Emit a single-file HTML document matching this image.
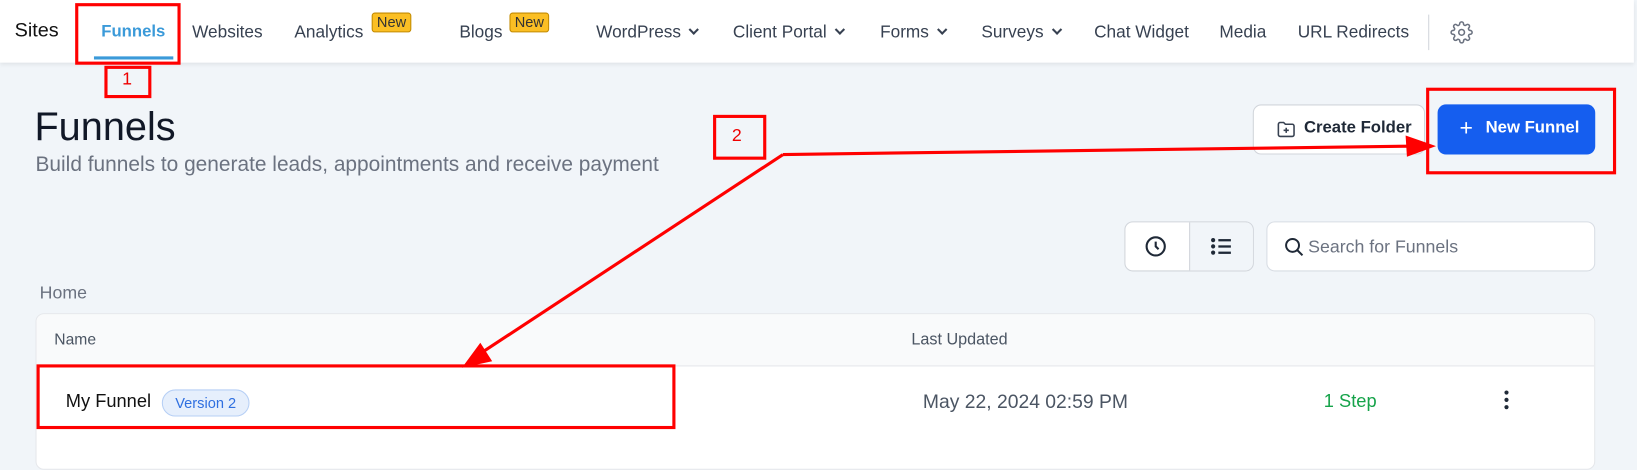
<!DOCTYPE html>
<html><head><meta charset="utf-8"><style>
*{margin:0;padding:0;box-sizing:border-box}
html,body{width:1637px;height:437px;overflow:hidden;background:#f1f5f9}
#w{position:absolute;left:0;top:0;width:1568px;height:419px;transform:scale(1.044);transform-origin:0 0;font-family:"Liberation Sans",sans-serif}
.a{position:absolute;white-space:nowrap}
.nav{position:absolute;left:0;top:0;width:1565px;height:60px;background:#fff;box-shadow:0 2px 4px rgba(0,0,0,.08)}
.ni{position:absolute;top:22px;font-size:16.5px;color:#374151}
.badge{position:absolute;top:12px;height:19px;background:#fbbf24;border:1px solid #c28a00;border-radius:3px;font-size:14px;color:#333;padding:0 4px;line-height:17px}
.chev{display:inline-block;width:7px;height:7px;border-right:2px solid #374151;border-bottom:2px solid #374151;transform:rotate(45deg);margin-left:9px;position:relative;top:-4px}
.red{position:absolute;border:3px solid #f00}
</style></head><body><div id="w">
<div class="nav">
<div class="ni" style="left:14px;font-size:19px;color:#111;top:19px">Sites</div>
<div class="ni" style="left:97px;color:#3b9ad9;font-weight:600;font-size:16px">Funnels</div>
<div class="a" style="left:90px;top:54px;width:76px;height:3px;background:#3b9ad9"></div>
<div class="ni" style="left:184px">Websites</div>
<div class="ni" style="left:282px">Analytics</div>
<div class="badge" style="left:356px">New</div>
<div class="ni" style="left:440px">Blogs</div>
<div class="badge" style="left:488px">New</div>
<div class="ni" style="left:571px">WordPress<span class="chev"></span></div>
<div class="ni" style="left:702px">Client Portal<span class="chev"></span></div>
<div class="ni" style="left:843px">Forms<span class="chev"></span></div>
<div class="ni" style="left:940px">Surveys<span class="chev"></span></div>
<div class="ni" style="left:1048px">Chat Widget</div>
<div class="ni" style="left:1168px">Media</div>
<div class="ni" style="left:1243px">URL Redirects</div>
<div class="a" style="left:1368px;top:14px;width:1px;height:34px;background:#d1d5db"></div>
<svg class="a" style="left:1389px;top:20px" width="22" height="22" viewBox="0 0 24 24" fill="none" stroke="#6b7280" stroke-width="1.6"><circle cx="12" cy="12" r="3"/><path d="M19.4 15a1.65 1.65 0 0 0 .33 1.82l.06.06a2 2 0 1 1-2.830 2.83l-.06-.06a1.65 1.65 0 0 0-1.82-.33 1.65 1.65 0 0 0-1 1.51V21a2 2 0 1 1-4 0v-.09A1.650 1.65 0 0 0 9 19.4a1.65 1.65 0 0 0-1.82.33l-.06.06a2 2 0 1 1-2.83-2.830l.06-.06A1.65 1.65 0 0 0 4.68 15a1.65 1.65 0 0 0-1.51-1H3a2 2 0 1 1 0-4h.09A1.65 1.65 0 0 0 4.6 9a1.65 1.65 0 0 0-.33-1.82l-.06-.06a2 2 0 1 1 2.83-2.83l.06.06A1.65 1.65 0 0 0 9 4.68 1.65 1.65 0 0 0 10 3.17V3a2 2 0 1 1 4 0v.09a1.65 1.65 0 0 0 1 1.51 1.65 1.65 0 0 0 1.82-.33l.06-.06a2 2 0 1 1 2.83 2.83l-.06.06A1.65 1.65 0 0 0 19.4 9a1.65 1.65 0 0 0 1.51 1H21a2 2 0 1 1 0 4h-.09a1.65 1.65 0 0 0-1.51 1z"/></svg>
</div>
<div class="red" style="left:72px;top:3px;width:101px;height:59px"></div>
<div class="red" style="left:100px;top:63px;width:45px;height:31px"></div>
<div class="a" style="left:117px;top:66px;color:#e00;font-size:17px">1</div>

<div class="a" style="left:33px;top:101px;font-size:38px;color:#111827">Funnels</div>
<div class="a" style="left:34px;top:147px;font-size:20px;color:#6b7280">Build funnels to generate leads, appointments and receive payment</div>

<div class="red" style="left:683px;top:110px;width:51px;height:43px"></div>
<div class="a" style="left:701px;top:120px;color:#e00;font-size:17px">2</div>

<div class="a" style="left:1200px;top:100px;width:165px;height:48px;background:#fff;border:1px solid #d1d5db;border-radius:8px"></div>
<svg class="a" style="left:1222px;top:114px" width="20" height="20" viewBox="0 0 24 24" fill="none" stroke="#374151" stroke-width="1.8"><path d="M3 6a2 2 0 0 1 2-2h4l2 2h8a2 2 0 0 1 2 2v10a2 2 0 0 1-2 2H5a2 2 0 0 1-2-2z"/><path d="M12 10v6M9 13h6"/></svg>
<div class="a" style="left:1249px;top:114px;font-size:16px;color:#1f2937;font-weight:600">Create Folder</div>
<div class="a" style="left:1377px;top:100px;width:151px;height:48px;background:#155eef;border-radius:8px"></div>
<div class="a" style="left:1398px;top:110px;font-size:22px;color:#fff;font-weight:300">+</div>
<div class="a" style="left:1423px;top:114px;font-size:16px;color:#fff;font-weight:700">New Funnel</div>
<div class="red" style="left:1366px;top:84px;width:182px;height:83px"></div>

<div class="a" style="left:1077px;top:212px;width:124px;height:48px;background:#fff;border:1px solid #d1d5db;border-radius:8px;overflow:hidden"><div style="position:absolute;left:61px;top:0;width:63px;height:48px;background:#f1f5f9;border-left:1px solid #d1d5db"></div></div>
<svg class="a" style="left:1096px;top:225px" width="22" height="22" viewBox="0 0 24 24" fill="none" stroke="#1f2937" stroke-width="2.2"><circle cx="12" cy="12" r="9.5"/><path d="M12 7v5l3 3"/></svg>
<svg class="a" style="left:1159px;top:226px" width="22" height="20" viewBox="0 0 22 20" fill="#1f2937"><circle cx="3" cy="4" r="2"/><circle cx="3" cy="10" r="2"/><circle cx="3" cy="16" r="2"/><rect x="8" y="3" width="12" height="2.2"/><rect x="8" y="9" width="12" height="2.2"/><rect x="8" y="15" width="12" height="2.2"/></svg>
<div class="a" style="left:1213px;top:212px;width:315px;height:48px;background:#fff;border:1px solid #d8dde4;border-radius:8px"></div>
<svg class="a" style="left:1230px;top:227px" width="19" height="19" viewBox="0 0 20 20" fill="none" stroke="#1f2937" stroke-width="2"><circle cx="8.5" cy="8.5" r="6.5"/><path d="M13.5 13.5l5 5"/></svg>
<div class="a" style="left:1253px;top:227px;font-size:17px;color:#6b7280">Search for Funnels</div>

<div class="a" style="left:38px;top:271px;font-size:17px;color:#6b7280">Home</div>
<div class="a" style="left:34px;top:300px;width:1494px;height:150px;background:#fff;border:1px solid #e5e7eb;border-radius:8px;overflow:hidden">
<div style="height:50px;background:#f9fafb;border-bottom:1px solid #e5e7eb"></div></div>
<div class="a" style="left:52px;top:317px;font-size:15px;color:#4b5563">Name</div>
<div class="a" style="left:873px;top:317px;font-size:15.5px;color:#4b5563">Last Updated</div>
<div class="a" style="left:63px;top:374px;font-size:17.5px;color:#111">My Funnel</div>
<div class="a" style="left:155px;top:373px;height:26px;width:84px;background:#e6effc;border:1px solid #b6cff5;border-radius:13px;font-size:14px;color:#2f6fe0;line-height:24px;text-align:center">Version 2</div>
<div class="a" style="left:884px;top:374px;font-size:18.5px;color:#4b5563">May 22, 2024 02:59 PM</div>
<div class="a" style="left:1268px;top:374px;font-size:17.5px;color:#16a34a">1 Step</div>
<svg class="a" style="left:1439px;top:373px" width="8" height="20" viewBox="0 0 8 20" fill="#1f2937"><circle cx="4" cy="3" r="2"/><circle cx="4" cy="10" r="2"/><circle cx="4" cy="17" r="2"/></svg>
<div class="red" style="left:35px;top:349px;width:612px;height:62px"></div>

<svg class="a" style="left:0;top:0" width="1568" height="419">
<g stroke="#f00" stroke-width="3" fill="#f00">
<line x1="750" y1="148" x2="1350" y2="140"/>
<polygon points="1371,140 1348,132 1349,148"/>
<line x1="750" y1="148" x2="458" y2="340"/>
<polygon points="446,350 460,331 469,345"/>
</g></svg>
</div></body></html>
